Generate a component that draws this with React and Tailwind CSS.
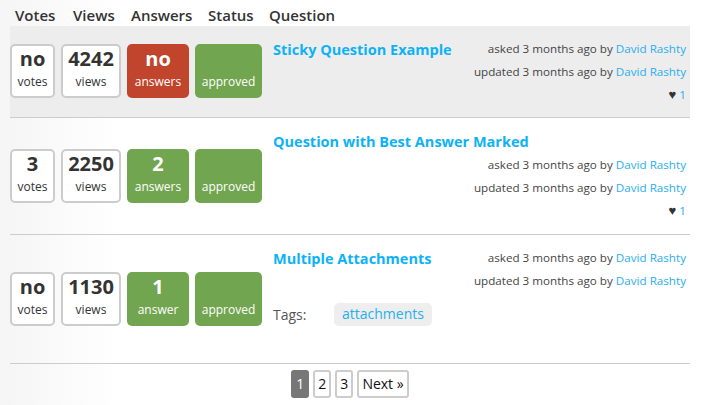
const font = { open: 'font-["Open_Sans",sans-serif]' };

const StatBox = ({ value, label, width, color = 'plain' }) => {
  const colors = {
    plain: 'bg-white border-2 border-[#cccccc] text-[#333333]',
    red: 'bg-[#c0452c] text-white',
    green: 'bg-[#72a550] text-white',
  };
  return (
    <div className={`${width} ${colors[color]} h-[54px] shrink-0 rounded-[5px] flex flex-col items-center box-border ${color === 'plain' ? 'pt-0' : 'pt-[2px]'}`}>
      <div className="h-[26px] text-xl font-bold leading-[26px]">{value}</div>
      <div className="text-xs leading-[20px]">{label}</div>
    </div>
  );
};

const Meta = ({ verb }) => (
  <div className="h-[23px] leading-[23px]">
    {verb} 3 months ago by <a className="text-[#29aef0]">David Rashty</a>
  </div>
);

const Row = ({ title, votes, views, answers, answersLabel, answersColor, likes, tags, className }) => (
  <div className={`flex items-center border-b border-[#cccccc] pb-px ${className}`}>
    <div className="flex gap-[6px]">
      <StatBox value={votes} label="votes" width="w-[45px]" />
      <StatBox value={views} label="views" width="w-[60px]" />
      <StatBox value={answers} label={answersLabel} width="w-[62px]" color={answersColor} />
      <StatBox value="" label="approved" width="w-[67px]" color="green" />
    </div>
    <div className="flex-1 self-stretch ml-[11px] mr-1 pt-[11px]">
      <div className="flex flex-wrap justify-between">
        <a className="block h-6 pt-px text-[14.5px] font-bold leading-6 text-[#0db2f6]">{title}</a>
        <div className="ml-auto text-right text-[11.65px] text-[#444444]">
          <Meta verb="asked" />
          <Meta verb="updated" />
          {likes && (
            <div className="h-[23px] leading-[23px]">
              <span className="text-[13px] text-[#333333]">{'\u2665\uFE0E'}</span> <a className="text-[#29aef0]">{likes}</a>
            </div>
          )}
        </div>
      </div>
      {tags && (
        <div className="flex items-center mt-[11px] text-sm">
          <span className="w-[61px] text-[#555555]">Tags:</span>
          <a className="h-[23px] leading-[22px] px-2 rounded-[5px] bg-[#eeeeee] text-[#29aef0]">{tags}</a>
        </div>
      )}
    </div>
  </div>
);

const PageLink = ({ children, active }) => (
  <div className={`h-7 px-[3px] min-w-[18px] box-border rounded-[3px] border-2 flex items-center justify-center text-sm ${active ? 'bg-[#777777] border-[#777777] text-white' : 'bg-white border-[#cccccc] text-[#111111]'}`}>
    {children}
  </div>
);

export default function App() {
  return (
    <div className={`${font.open} w-[724px] h-[405px] overflow-hidden bg-[linear-gradient(to_right,#f5f5f5,#ffffff_120px)]`}>
      <div className="flex h-[26px] pl-[15px] items-center pt-[4px] text-[15px] font-semibold text-[#333333]">
        <div className="w-[58px]">Votes</div>
        <div className="w-[58px]">Views</div>
        <div className="w-[77px]">Answers</div>
        <div className="w-[61px]">Status</div>
        <div>Question</div>
      </div>
      <div className="ml-[10px] w-[680px]">
        <Row className="h-[92px] bg-[#ededed]" title="Sticky Question Example" votes="no" views="4242" answers="no" answersLabel="answers" answersColor="red" likes="1" />
        <Row className="h-[117px]" title="Question with Best Answer Marked" votes="3" views="2250" answers="2" answersLabel="answers" answersColor="green" likes="1" />
        <Row className="h-[129px]" title="Multiple Attachments" votes="no" views="1130" answers="1" answersLabel="answer" answersColor="green" tags="attachments" />
        <div className="flex justify-center gap-1 pt-[6px]">
          <PageLink active>1</PageLink>
          <PageLink>2</PageLink>
          <PageLink>3</PageLink>
          <PageLink>Next »</PageLink>
        </div>
      </div>
    </div>
  );
}
